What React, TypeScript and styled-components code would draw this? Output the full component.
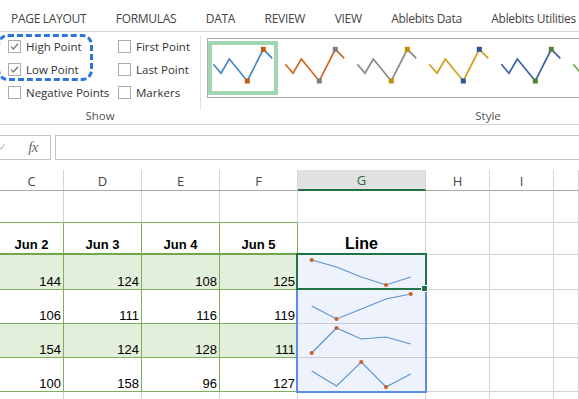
import React from 'react';
import styled, {createGlobalStyle} from 'styled-components';

const GRID = '#d4d4d4';
const TABLE = '#7fae5f';
const TABLE_FILL = '#e2efda';
const SPARK_FILL = '#edf2fc';

const GlobalStyle = createGlobalStyle`
    html, body {
        margin: 0;
        padding: 0;
        background: #ffffff;
    }

    body {
        width: 579px;
        height: 399px;
        overflow: hidden;
        font-family: "Open Sans", "Segoe UI", sans-serif;
        color: #444444;
    }
`;

const tabs = ['PAGE LAYOUT', 'FORMULAS', 'DATA', 'REVIEW', 'VIEW', 'Ablebits Data', 'Ablebits Utilities'];

const leftChecks = [
    {label: 'High Point', checked: true},
    {label: 'Low Point', checked: true},
    {label: 'Negative Points', checked: false},
];
const rightChecks = ['First Point', 'Last Point', 'Markers'];

// line colour / marker colour of each style thumbnail
const sparkStyles = [
    {line: '#4a88c7', mark: '#c55a11', selected: true},
    {line: '#cf6a27', mark: '#7f7f7f'},
    {line: '#8a8a8a', mark: '#bf9000'},
    {line: '#cda21c', mark: '#2f5597'},
    {line: '#3e62a3', mark: '#548235'},
    {line: '#6aa84f', mark: '#6aa84f'},
];

const thumbX = [5.3, 13, 21.3, 39.3, 55.3, 64.3];
const thumbY = [23.3, 32.3, 18, 40, 8.3, 17.3];

const columns = ['C', 'D', 'E', 'F', 'G', 'H', 'I', ''];
const headers = ['Jun 2', 'Jun 3', 'Jun 4', 'Jun 5'];
const data = [
    [144, 124, 108, 125],
    [106, 111, 116, 119],
    [154, 124, 128, 111],
    [100, 158, 96, 127],
];
const rowHeights = [35, 34, 34, 34];

// sparkline y positions inside each G cell, with marker indexes (high / low)
const sparkLines = [
    {y: [5, 12, 22, 30, 22], marks: [0, 3]},
    {y: [16, 29, 19, 9, 4], marks: [1, 4]},
    {y: [29, 4, 15, 13, 20], marks: [0, 1]},
    {y: [13, 28, 4, 29, 16], marks: [2, 3]},
];
const sparkX = [13.7, 38.5, 63.3, 88, 112.7];

const CheckMark = () => (
    <svg width="11" height="11" viewBox="0 0 11 11">
        <path d="M2 5.6 L4.4 8 L9 2.8" fill="none" stroke="#7a7a7a" strokeWidth="1.3"/>
    </svg>
);

// the enter button of the formula bar, mostly scrolled off to the left
const EnterIcon = () => (
    <svg width="6" height="10" viewBox="0 0 6 10">
        <path d="M0 6.5 L1.2 8 L4.5 3" fill="none" stroke="#c4c4c4" strokeWidth="1.2"/>
    </svg>
);

const StyleThumb = ({line, mark}: { line: string; mark: string }) => (
    <svg width="70" height="54" viewBox="0 0 70 54">
        <polyline
            points={thumbX.map((x, i) => `${x},${thumbY[i]}`).join(' ')}
            fill="none"
            stroke={line}
            strokeWidth="1.7"
        />
        <rect x={36.8} y={37.5} width="5" height="5" fill={mark}/>
        <rect x={52.8} y={5.8} width="5" height="5" fill={mark}/>
    </svg>
);

const CellSpark = ({y, marks}: { y: number[]; marks: number[] }) => (
    <svg width="127" height="34" viewBox="0 0 127 34">
        <polyline
            points={sparkX.map((x, i) => `${x},${y[i]}`).join(' ')}
            fill="none"
            stroke="#5b93d3"
            strokeWidth="1.1"
        />
        {marks.map((m) => (
            <circle key={m} cx={sparkX[m]} cy={y[m]} r="2.1" fill="#c8622a"/>
        ))}
    </svg>
);

const App = () => {
    return (
        <Page>
            <GlobalStyle/>
            <TabBar>
                {tabs.map((t) => (
                    <Tab key={t}>{t}</Tab>
                ))}
            </TabBar>

            <Ribbon>
                <ShowGroup>
                    <CheckGrid>
                        <CheckColumn>
                            {leftChecks.map((c) => (
                                <CheckItem key={c.label}>
                                    <Box>{c.checked && <CheckMark/>}</Box>
                                    {c.label}
                                </CheckItem>
                            ))}
                        </CheckColumn>
                        <CheckColumn>
                            {rightChecks.map((label) => (
                                <CheckItem key={label}>
                                    <Box/>
                                    {label}
                                </CheckItem>
                            ))}
                        </CheckColumn>
                    </CheckGrid>
                    <GroupLabel>Show</GroupLabel>
                    <Highlight/>
                </ShowGroup>
                <GroupSeparator/>
                <StyleGroup>
                    <Gallery>
                        {sparkStyles.map((s, i) => (
                            <GalleryItem key={i} $selected={!!s.selected}>
                                <StyleThumb line={s.line} mark={s.mark}/>
                            </GalleryItem>
                        ))}
                    </Gallery>
                    <GroupLabel>Style</GroupLabel>
                </StyleGroup>
            </Ribbon>

            <FormulaArea>
                <NameBox>
                    <EnterIcon/>
                    <Fx>fx</Fx>
                </NameBox>
                <FormulaInput/>
            </FormulaArea>

            <ColumnHeaders>
                {columns.map((c, i) => (
                    <ColumnHeader key={i} $active={c === 'G'}>{c}</ColumnHeader>
                ))}
            </ColumnHeaders>

            <SheetRow $h={32}>
                {columns.map((c, i) => (
                    <BlankCell key={i} $tableBelow={i < 4}/>
                ))}
            </SheetRow>

            <SheetRow $h={32}>
                {headers.map((h) => (
                    <HeadCell key={h}>{h}</HeadCell>
                ))}
                <LineHeadCell>Line</LineHeadCell>
                <BlankCell/>
                <BlankCell/>
                <BlankCell/>
            </SheetRow>

            <DataBlock>
                {data.map((row, r) => (
                    <SheetRow key={r} $h={rowHeights[r]}>
                        {row.map((v, c) => (
                            <NumCell key={c} $banded={r % 2 === 0}>{v}</NumCell>
                        ))}
                        <SparkCell>
                            <CellSpark y={sparkLines[r].y} marks={sparkLines[r].marks}/>
                        </SparkCell>
                        <BlankCell/>
                        <BlankCell/>
                        <BlankCell/>
                    </SheetRow>
                ))}
                <ActiveCell/>
                <GroupSelection/>
                <FillHandle/>
            </DataBlock>

            <SheetRow $h={20}>
                {columns.map((c, i) => (
                    <BlankCell key={i}/>
                ))}
            </SheetRow>
        </Page>
    );
};

export default App;

// styles
const Page = styled.div`
    width: 579px;
    height: 399px;
    overflow: hidden;
    background: #ffffff;
`;

const TabBar = styled.div`
    display: flex;
    align-items: center;
    gap: 29.5px;
    height: 32px;
    box-sizing: border-box;
    padding: 6px 0 0 11px;
    border-bottom: 1px solid #d5d5d5;
    white-space: nowrap;
    overflow: hidden;
`;

const Tab = styled.span`
    font-size: 12px;
    letter-spacing: -0.3px;
    color: #444444;
    flex-shrink: 0;
`;

const Ribbon = styled.div`
    display: flex;
    height: 93px;
    box-sizing: border-box;
    border-bottom: 1px solid #d5d5d5;
    overflow: hidden;
`;

const ShowGroup = styled.div`
    position: relative;
    width: 200px;
    flex-shrink: 0;
    display: flex;
    flex-direction: column;
`;

const CheckGrid = styled.div`
    display: grid;
    grid-template-columns: 110px auto;
    padding: 3px 0 0 8px;
`;

const CheckColumn = styled.div`
    display: flex;
    flex-direction: column;
`;

const CheckItem = styled.div`
    display: flex;
    align-items: center;
    gap: 5px;
    height: 23px;
    font-size: 11.5px;
    color: #333333;
    white-space: nowrap;
`;

const Box = styled.span`
    width: 13px;
    height: 13px;
    box-sizing: border-box;
    border: 1px solid #ababab;
    background: #ffffff;
    display: flex;
    align-items: center;
    justify-content: center;
`;

const GroupLabel = styled.div`
    margin-top: auto;
    text-align: center;
    font-size: 11.5px;
    line-height: 16px;
    color: #555555;
`;

const Highlight = styled.div`
    position: absolute;
    left: -3px;
    top: 2px;
    width: 96px;
    height: 47px;
    box-sizing: border-box;
    border: 3px dashed #2e74d8;
    border-radius: 11px;
`;

const GroupSeparator = styled.div`
    width: 1px;
    flex-shrink: 0;
    background: #e1e1e1;
    margin: 4px 0 14px;
`;

const StyleGroup = styled.div`
    width: 562px;
    flex-shrink: 0;
    padding-left: 6px;
    display: flex;
    flex-direction: column;
`;

const Gallery = styled.div`
    display: flex;
    gap: 2px;
    height: 60px;
    margin-top: 6px;
    box-sizing: border-box;
    padding-top: 2px;
    border: 1px solid #ababab;
    border-right: none;
    overflow: hidden;
`;

const GalleryItem = styled.div<{ $selected: boolean }>`
    width: 70px;
    height: 54px;
    flex-shrink: 0;
    box-shadow: ${(p) => (p.$selected ? 'inset 0 0 0 4px #a2d5b4' : 'none')};
`;

const FormulaArea = styled.div`
    display: flex;
    gap: 4px;
    height: 45px;
    box-sizing: border-box;
    padding-top: 10px;
    padding-bottom: 10px;
`;

const NameBox = styled.div`
    width: 52px;
    margin-left: -1px;
    box-sizing: border-box;
    border: 1px solid #c6c6c6;
    display: flex;
    align-items: center;
    justify-content: space-between;
    padding-right: 12px;
    overflow: hidden;

    svg {
        margin-top: -4px;
    }
`;

const Fx = styled.span`
    font-family: "Liberation Serif", "Times New Roman", serif;
    font-style: italic;
    font-size: 15px;
    color: #6b6b6b;
    letter-spacing: -0.5px;
`;

const FormulaInput = styled.div`
    flex: 1;
    margin-right: -1px;
    border: 1px solid #c6c6c6;
`;

const ColumnHeaders = styled.div`
    display: grid;
    grid-template-columns: 64px 78px 78px 78px 128px 64px 64px 1fr;
    height: 21px;
    box-sizing: border-box;
    border-bottom: 1px solid #ababab;
`;

const ColumnHeader = styled.div<{ $active: boolean }>`
    display: flex;
    align-items: center;
    justify-content: center;
    box-sizing: border-box;
    border-right: 1px solid ${GRID};
    font-size: 13px;
    color: ${(p) => (p.$active ? '#217346' : '#444444')};
    background: ${(p) => (p.$active ? '#e1e1e1' : '#ffffff')};
    border-bottom: ${(p) => (p.$active ? '2px solid #217346' : 'none')};
    margin-bottom: ${(p) => (p.$active ? '-1px' : '0')};
    padding-top: 1px;
`;

const SheetRow = styled.div<{ $h: number }>`
    display: grid;
    grid-template-columns: 64px 78px 78px 78px 128px 64px 64px 1fr;
    height: ${(p) => p.$h}px;
`;

const BlankCell = styled.div<{ $tableBelow?: boolean }>`
    box-sizing: border-box;
    border-right: 1px solid ${GRID};
    border-bottom: 1px solid ${(p) => (p.$tableBelow ? TABLE : GRID)};
`;

const HeadCell = styled.div`
    box-sizing: border-box;
    border-right: 1px solid ${TABLE};
    border-bottom: 2px solid #70a84c;
    display: flex;
    align-items: flex-end;
    justify-content: center;
    font-family: "Liberation Sans", Arial, sans-serif;
    font-weight: bold;
    font-size: 13px;
    line-height: 15px;
    color: #000000;
    padding-bottom: 1px;
`;

const LineHeadCell = styled.div`
    box-sizing: border-box;
    border-right: 1px solid ${GRID};
    border-bottom: 1px solid ${GRID};
    display: flex;
    align-items: flex-end;
    justify-content: center;
    font-family: "Liberation Sans", Arial, sans-serif;
    font-weight: bold;
    font-size: 16px;
    line-height: 18px;
    color: #000000;
    padding-bottom: 1px;
`;

const NumCell = styled.div<{ $banded: boolean }>`
    box-sizing: border-box;
    border-right: 1px solid ${TABLE};
    border-bottom: 1px solid ${TABLE};
    background: ${(p) => (p.$banded ? TABLE_FILL : '#ffffff')};
    display: flex;
    align-items: flex-end;
    justify-content: flex-end;
    padding-right: 2px;
    font-family: "Liberation Sans", Arial, sans-serif;
    font-size: 13px;
    line-height: 15px;
    color: #000000;
`;

const SparkCell = styled.div`
    box-sizing: border-box;
    border-right: 1px solid ${GRID};
    border-bottom: 1px solid #c8cbd8;
    background: ${SPARK_FILL};
    overflow: hidden;

    svg {
        display: block;
    }
`;

const DataBlock = styled.div`
    position: relative;
`;

const ActiveCell = styled.div`
    position: absolute;
    left: 296px;
    top: -2px;
    width: 131px;
    height: 37px;
    box-sizing: border-box;
    border: 2px solid #217346;
`;

const GroupSelection = styled.div`
    position: absolute;
    left: 296px;
    top: 35px;
    width: 131px;
    height: 103px;
    box-sizing: border-box;
    border: 2px solid #5b8ee6;
    border-top: none;
`;

const FillHandle = styled.div`
    position: absolute;
    left: 421px;
    top: 30px;
    width: 7px;
    height: 7px;
    box-sizing: border-box;
    background: #217346;
    border: 1px solid #ffffff;
`;
